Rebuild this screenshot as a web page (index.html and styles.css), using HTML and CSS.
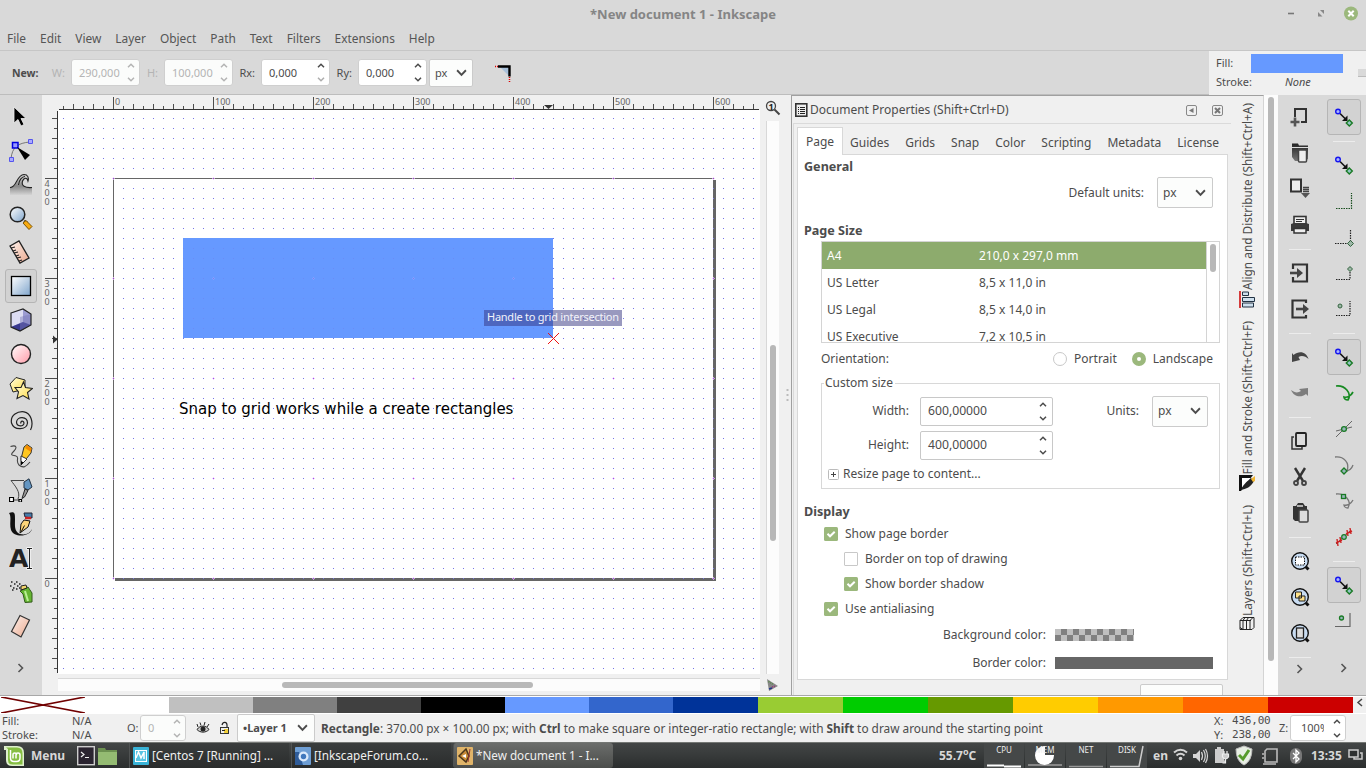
FILE: index.html
```html
<!DOCTYPE html>
<html lang="en">
<head>
<meta charset="utf-8">
<title>*New document 1 - Inkscape</title>
<link rel="stylesheet" href="styles.css">
</head>
<body>
<svg class="defs" width="0" height="0">
  <defs>
    <linearGradient id="gBlue" x1="0" y1="0" x2="1" y2="1"><stop offset="0" stop-color="#fff"/><stop offset="1" stop-color="#7fa5cc"/></linearGradient>
    <linearGradient id="gPink" x1="0" y1="0" x2="1" y2="1"><stop offset="0" stop-color="#fff"/><stop offset="1" stop-color="#ff9ba8"/></linearGradient>
    <linearGradient id="gPeach" x1="0" y1="0" x2="1" y2="1"><stop offset="0" stop-color="#fff3ee"/><stop offset="1" stop-color="#eaa98e"/></linearGradient>
    <linearGradient id="gYellow" x1="0" y1="0" x2="1" y2="1"><stop offset="0" stop-color="#fffde0"/><stop offset="1" stop-color="#ffdc45"/></linearGradient>
    <linearGradient id="gDark" x1="0" y1="0" x2="0" y2="1"><stop offset="0" stop-color="#222"/><stop offset="1" stop-color="#777"/></linearGradient>
    <linearGradient id="gFade" x1="0" y1="0" x2="0" y2="1"><stop offset="0" stop-color="#ddd"/><stop offset=".55" stop-color="#888"/><stop offset="1" stop-color="#d4d4d4"/></linearGradient>
    <symbol id="up" viewBox="0 0 8 5"><path d="M1 4.2L4 1.2L7 4.2" fill="none" stroke="currentColor" stroke-width="1.5"/></symbol>
    <symbol id="down" viewBox="0 0 8 5"><path d="M1 .8L4 3.8L7 .8" fill="none" stroke="currentColor" stroke-width="1.5"/></symbol>
    <symbol id="chev" viewBox="0 0 10 7"><path d="M1 1L5 5.2L9 1" fill="none" stroke="#4c4c4c" stroke-width="1.7"/></symbol>
    <symbol id="more" viewBox="0 0 24 24"><path d="M9.5 8L13.500 12L9.5 16" fill="none" stroke="#555" stroke-width="1.600"/></symbol>
    <symbol id="check" viewBox="0 0 14 14"><rect width="14" height="14" rx="1.5" fill="#9bb87c"/><path d="M3.5 6.8L6 9.3L10.7 4.7" fill="none" stroke="#fff" stroke-width="2"/></symbol>
    <symbol id="snap" viewBox="0 0 24 24"><path d="M8 8.500L14 14.500" fill="none" stroke="#111" stroke-width="1.600"/><path d="M15.500 10.500V16H10z" fill="#111"/><circle cx="6" cy="6.500" r="2.300" fill="#aab4ff" stroke="#1616ee" stroke-width="1.400"/><path d="M17.300 14.900L20.300 17.900L17.300 20.900L14.300 17.900Z" fill="#92c5c5" stroke="#197a24" stroke-width="1.400"/></symbol>
    <symbol id="lens" viewBox="0 0 24 24"><path d="M17 17L20.500 20.500" stroke="#111" stroke-width="3"/><circle cx="12" cy="12" r="8.300" fill="#c8dcf2" stroke="#111" stroke-width="1.400"/></symbol>
    <pattern id="dots" x="63" y="118" width="10" height="10" patternUnits="userSpaceOnUse"><rect width="1" height="1" fill="#7474e8"/></pattern>
    <pattern id="major" x="113" y="178" width="100" height="100" patternUnits="userSpaceOnUse"><rect width="1" height="1" fill="#a63ff0"/><rect x="1" width="1" height="1" fill="#ecc4fa"/><rect x="99" width="1" height="1" fill="#ecc4fa"/><rect y="1" width="1" height="1" fill="#ecc4fa"/><rect y="99" width="1" height="1" fill="#ecc4fa"/></pattern>
    <pattern id="htick" x="113" y="95" width="100" height="15" patternUnits="userSpaceOnUse"><path d="M.5 2V14M20.500 9V14M40.500 9V14M60.500 9V14M80.500 9V14M10.500 11V14M30.500 11V14M50.500 11V14M70.500 11V14M90.500 11V14" stroke="#4c4c4c"/></pattern>
    <pattern id="vtick" x="43" y="178" width="15" height="100" patternUnits="userSpaceOnUse"><path d="M2 .5H14M9 20.500H14M9 40.500H14M9 60.500H14M9 80.500H14M11 10.500H14M11 30.500H14M11 50.500H14M11 70.500H14M11 90.500H14" stroke="#4c4c4c"/></pattern>
    <pattern id="checker" width="12" height="12" patternUnits="userSpaceOnUse"><rect width="12" height="12" fill="#bfbfbf"/><path d="M6 0h6v6H6zM0 6h6v6H0z" fill="#808080"/></pattern>
  </defs>
</svg>

<header class="titlebar">
  <h1>*New document 1 - Inkscape</h1>
  <div class="winbtns">
    <svg width="80" height="20"><path d="M3 9.500h6" stroke="#777" stroke-width="1.600"/><path d="M35 6h4v4zM33 8v4.500h4.500z" fill="#888"/><circle cx="66" cy="9.500" r="7" fill="#9bb87c"/><path d="M63.300 6.800l5.400 5.400M68.700 6.800l-5.400 5.400" stroke="#fff" stroke-width="2"/></svg>
  </div>
</header>

<nav class="menubar"><span>File</span><span>Edit</span><span>View</span><span>Layer</span><span>Object</span><span>Path</span><span>Text</span><span>Filters</span><span>Extensions</span><span>Help</span></nav>

<div class="toolrow">
  <div class="toolctl">
    <b class="t-new">New:</b>
    <label class="dim l-w">W:</label><div class="spin dim"><span>290,000</span><i><svg><use href="#up"/></svg><svg><use href="#down"/></svg></i></div>
    <label class="dim l-h">H:</label><div class="spin dim"><span>100,000</span><i><svg><use href="#up"/></svg><svg><use href="#down"/></svg></i></div>
    <label class="l-rx">Rx:</label><div class="spin"><span>0,000</span><i><svg><use href="#up"/></svg><svg class="faded"><use href="#down"/></svg></i></div>
    <label class="l-ry">Ry:</label><div class="spin"><span>0,000</span><i><svg><use href="#up"/></svg><svg><use href="#down"/></svg></i></div>
    <div class="combo small"><span>px</span><svg><use href="#chev"/></svg></div>
    <svg class="corner" width="20" height="20"><path d="M5 4h9v9z" fill="#a8c0da"/><path d="M3 3.500h11.500v10" fill="none" stroke="#000" stroke-width="2.400"/><path d="M0 3.500h3M14.500 14v5" stroke="#d00" stroke-width="1.500" stroke-dasharray="1 1"/></svg>
  </div>
  <div class="style">
    <div><span>Fill:</span><i class="fillsw"></i></div>
    <div><span>Stroke:</span><em>None</em></div>
    <i class="nub"></i>
  </div>
</div>

<main class="main">
  <aside class="toolbox">
    <svg viewBox="0 0 24 24"><path d="M5 3V19L9 15.500L12 22L15 20.500L12 14.500H17Z" fill="#000" stroke="#eee" stroke-width=".8"/></svg>
    <svg viewBox="0 0 24 24"><path d="M2 21C3 9 9 5 21 4" fill="none" stroke="#777"/><path d="M0.500 19.500h4v4h-4zM19.500 1.500h4v4h-4z" fill="#aaf" stroke="#55e"/><rect x="3.500" y="4.500" width="5.500" height="5.500" fill="#99f" stroke="#00d" stroke-width="1.500"/><path d="M8 9L21 17L16 22Z" fill="#000"/></svg>
    <svg viewBox="0 0 24 24"><path d="M1 23V16C8 16 7 4 15 3C19 2.500 20 6 19 9C18 6 15 6 14 10C13 14 17 17 23 15V23Z" fill="url(#gFade)"/><path d="M1 15.500C8 16 7 3 15 2.500C19 2.500 20 6 19 9C18 5 15 5.500 13.500 9C12 14 16 16 23 15.500M9.500 13C10 8 13 4.500 16 4.500" fill="none" stroke="#222" stroke-width="1.100"/></svg>
    <svg viewBox="0 0 24 24"><path d="M15 15L18 17" stroke="#333" stroke-width="3"/><path d="M14 17L17 14.500L23 20.500L20 23.500Z" fill="#f7aa10" stroke="#7a5200"/><circle cx="8.500" cy="8.500" r="7.300" fill="url(#gBlue)" stroke="#222" stroke-width="1.500"/></svg>
    <svg viewBox="0 0 24 24"><path d="M1 6L10 1L20 18L11 23Z" fill="url(#gPeach)" stroke="#222" stroke-width="1.300"/><path d="M2 8l4-1M4 11l3-1M5 13l4-1M7 16l3-1M8 18l4-1M10 21l3-1" stroke="#222" stroke-width="1.200"/></svg>
    <svg class="sel" viewBox="0 0 30 32"><rect x="5.500" y="6.500" width="19" height="19" fill="url(#gBlue)" stroke="#000" stroke-width="1.300"/></svg>
    <svg viewBox="0 0 24 24"><path d="M2 5L14 1L22 6V17L11 23L2 19Z" fill="#9a9ad2"/><path d="M2 5L14 1V14L2 19Z" fill="#dcdcf2"/><path d="M14 1L22 6V17L14 14Z" fill="#9c9cd2"/><path d="M2 19L14 14L22 17L11 23Z" fill="#38388f"/><path d="M11 9L22 6V17L11 23Z" fill="#7777b8" fill-opacity=".45"/><path d="M2 5L14 1L22 6V17L11 23L2 19Z" fill="none" stroke="#222" stroke-width="1.200"/></svg>
    <svg viewBox="0 0 24 24"><circle cx="12" cy="12" r="9.500" fill="url(#gPink)" stroke="#222" stroke-width="1.400"/></svg>
    <svg viewBox="0 0 24 24"><path d="M1 8L7 1.500L16 4L16 13L4 16Z" fill="url(#gYellow)" stroke="#222"/><path d="M14.500 6L16.500 11.500L23.500 12.500L18.500 16.500L20 23L14 19.500L8 22.500L9.500 16L6 11.500L12 11.500Z" fill="url(#gYellow)" stroke="#222" stroke-width="1.100"/></svg>
    <svg viewBox="0 0 24 24"><path d="M12 13.500C11 11 14.500 10 15 13C15 17 7.500 17 7.500 12C8 6 18.500 6 18.500 13C18 20 5 21 2.500 13C1 5 9 1 15 1.800C22 3 25 13 21.500 20" fill="none" stroke="#222" stroke-width="1.200"/></svg>
    <svg viewBox="0 0 24 24"><path d="M1.500 2.500C8 .5 8 4 5 7C0 12 4 11 7 12C11 13 6 17 10 21C14 24.500 17 23 21 18" fill="none" stroke="#444" stroke-width="1.100"/><path d="M12 15L15 3L18 .5L23 4L22 9L13 20Z" fill="#ffc71f" stroke="#333"/><path d="M18 1L22.500 4.500L22 8L16 4Z" fill="#f58a00"/><path d="M12 12L18 15L12 21Z" fill="#fff" stroke="#333"/><path d="M12 17l2.500 1.500-2.500 2.500z"/></svg>
    <svg viewBox="0 0 24 24"><path d="M2 2.500H15M2 2.500C6 8 12 14 9 21M3 22H11" fill="none" stroke="#444"/><path d="M15 4L20 .8L23 9L19 12L15 10Z" fill="#6496c2" stroke="#234"/><path d="M16 11L19 12.500L15.500 19L13 20.500Z" fill="#999" stroke="#222"/><path d="M.5 19.500h4v4h-4zM10 21.500h2.500v2.500H10z" fill="#fff" stroke="#000" stroke-width="1.200"/></svg>
    <svg viewBox="0 0 24 24"><path d="M0 1C6-1 6 2 6 7C6 14 5 19 11 22C17 23.500 21 21 23 17C21 25 5 26 2 18C0 11 3 5 0 1Z" fill="#111"/><path d="M15 1L23 1V6L16 5Z" fill="#447dab" stroke="#223"/><path d="M16 6h6" stroke="#c22" stroke-width="2.500"/><path d="M15 8L21 9L19 15L11 21L12 12Z" fill="#fbd479" stroke="#111"/><path d="M12 20L15.500 13.500" stroke="#111"/></svg>
    <svg viewBox="0 0 24 24"><text class="aicon" x="0" y="21">A</text><path d="M17.500 2.500h6M20.500 2v20M17.500 22.500h6" fill="none" stroke="#fff" stroke-width="2.600"/><path d="M18 2.500h5M20.500 2v20M18 22.500h5" fill="none" stroke="#222" stroke-width="1.100"/></svg>
    <svg viewBox="0 0 24 24"><path d="M2 2h1.500M5 4h1.500M1 6h1.500M4 8h1.500M7 2h1.500M8 6h1.500M10 4h1.500M3 10h1.500M7 9h1.500M10 8h1.500" stroke="#222" stroke-width="1.500"/><path d="M11 11L19 7L23 13L23 22L16 22.500L14 14Z" fill="#65b532" stroke="#345b1d"/><path d="M12 6L17 5L18 8L12 10Z" fill="#f2d56c" stroke="#222"/><path d="M16 11L19 21" stroke="#baf095" stroke-width="2"/></svg>
    <svg viewBox="0 0 24 24"><path d="M11 1.500L20.500 6L12 23L2.500 17.500Z" fill="url(#gPeach)" stroke="#333" stroke-width="1.200"/></svg>
    <svg class="last" viewBox="0 0 24 24"><use href="#more"/></svg>
  </aside>

  <section class="canvas">
    <svg width="749" height="600" viewBox="42 95 749 600">
      <rect x="42" y="95" width="749" height="600" fill="#f0f0f0"/>
      <rect x="58" y="110" width="702" height="564" fill="#fff"/>
      <rect x="59" y="95" width="700" height="14" fill="url(#htick)"/>
      <rect x="43" y="110" width="15" height="563" fill="url(#vtick)"/>
      <path d="M59 109.500H759M57.500 111V673" stroke="#333"/>
      <path d="M544 105h9l-4.500 4z" fill="#333"/><path d="M53 335.500v8l4.500-4z" fill="#333"/>
      <g class="ruler"><text x="115" y="105">0</text><text x="215" y="105">100</text><text x="315" y="105">200</text><text x="415" y="105">300</text><text x="515" y="105">400</text><text x="615" y="105">500</text><text x="715" y="105">600</text>
      <text x="44.500" y="187">4</text><text x="44.500" y="196">0</text><text x="44.500" y="205">0</text>
      <text x="44.500" y="287">3</text><text x="44.500" y="296">0</text><text x="44.500" y="305">0</text>
      <text x="44.500" y="387">2</text><text x="44.500" y="396">0</text><text x="44.500" y="405">0</text>
      <text x="44.500" y="487">1</text><text x="44.500" y="496">0</text><text x="44.500" y="505">0</text>
      <text x="44.500" y="587">0</text></g>
      <path d="M713 180h3v401H115v-3h598z" fill="#666"/>
      <rect x="59" y="112" width="701" height="561" fill="url(#dots)"/>
      <path d="M113.500 578V178.500H714" fill="none" stroke="#666"/>
      <rect x="59" y="112" width="701" height="561" fill="url(#major)" opacity=".7"/>
      <rect x="183" y="238" width="370" height="100" fill="#69f"/>
      <rect x="183" y="239" width="370" height="99" fill="url(#dots)" opacity=".45"/>
      <rect x="184" y="239" width="368" height="98" fill="url(#major)" opacity=".2"/>
      <text class="drawtext" x="179" y="414">Snap to grid works while a create rectangles</text>
      <rect x="484" y="310" width="138" height="16" fill="#33337f" fill-opacity=".5"/>
      <text class="tip" x="487" y="321" textLength="132">Handle to grid intersection</text>
      <path d="M548 333l11 11M559 333l-11 11" stroke="#e11" stroke-width="1"/>
      <rect x="766" y="121" width="13" height="553" fill="#fcfcfc"/><path d="M766.500 121v553" stroke="#d8d8d8"/>
      <rect x="770" y="345" width="6" height="196" rx="3" fill="#b8b8b8"/>
      <rect x="58" y="678" width="702" height="13" fill="#fcfcfc"/><path d="M58 678.500h702" stroke="#d8d8d8"/>
      <rect x="282" y="682" width="251" height="6" rx="3" fill="#b8b8b8"/>
      <circle cx="771" cy="106" r="4.500" fill="#eee" stroke="#444" stroke-width="1.300"/><path d="M774.500 109.500L779.500 114.500" stroke="#444" stroke-width="2"/><text class="one" x="768.500" y="109.500">1</text>
      <path d="M767 679l11 7-9 5z" fill="#888"/><path d="M768.500 681.500l5 3" stroke="#584" stroke-width="1.500" stroke-dasharray="1 1"/><path d="M772 687l4-1" stroke="#937" stroke-width="1.500" stroke-dasharray="1 1"/><path d="M769 689l3-1" stroke="#238" stroke-width="1.500"/>
      <path d="M787.500 389v2M787.500 394v2M787.500 399v2" stroke="#bbb" stroke-width="2"/>
    </svg>
  </section>

  <section class="dock">
    <div class="dockhead">
      <svg width="13" height="14"><rect x=".8" y=".8" width="11" height="12.400" fill="#eee" stroke="#333" stroke-width="1.600"/><path d="M3 4.500h1M3 6.500h1M3 8.500h1M3 10.500h1M5 4.500h5M5 6.500h5M5 8.500h5M5 10.500h5" stroke="#222"/></svg>
      <span>Document Properties (Shift+Ctrl+D)</span>
      <svg class="hb1" width="11" height="11"><rect x=".5" y=".5" width="10" height="10" rx="1.500" fill="none" stroke="#888"/><path d="M7.500 3v5L3 5.500z" fill="#777"/></svg>
      <svg width="11" height="11"><rect x=".5" y=".5" width="10" height="10" rx="1.500" fill="none" stroke="#888"/><path d="M3 3l5 5M8 3L3 8" stroke="#777" stroke-width="2"/></svg>
    </div>
    <div class="notebook">
      <div class="tabs"><span class="on">Page</span><span>Guides</span><span>Grids</span><span>Snap</span><span>Color</span><span>Scripting</span><span>Metadata</span><span>License</span></div>
      <div class="page">
        <h2 class="h-general">General</h2>
        <div class="units"><span>Default units:</span><div class="combo"><span>px</span><svg><use href="#chev"/></svg></div></div>
        <h2 class="h-size">Page Size</h2>
        <div class="list">
          <div class="rows">
            <div class="row on"><span>A4</span><span>210,0 x 297,0 mm</span></div>
            <div class="row"><span>US Letter</span><span>8,5 x 11,0 in</span></div>
            <div class="row"><span>US Legal</span><span>8,5 x 14,0 in</span></div>
            <div class="row"><span>US Executive</span><span>7,2 x 10,5 in</span></div>
          </div>
          <div class="lscroll"><i></i></div>
        </div>
        <div class="orient"><span class="grow">Orientation:</span><i class="radio"></i><span class="por">Portrait</span><i class="radio on"></i><span>Landscape</span></div>
        <div class="frame">
          <span class="legend">Custom size</span>
          <div class="frow"><label>Width:</label><div class="num"><span>600,00000</span><i><svg><use href="#up"/></svg><svg><use href="#down"/></svg></i></div><span class="ul">Units:</span><div class="combo"><span>px</span><svg><use href="#chev"/></svg></div></div>
          <div class="frow"><label>Height:</label><div class="num"><span>400,00000</span><i><svg><use href="#up"/></svg><svg><use href="#down"/></svg></i></div></div>
          <div class="resize"><svg width="11" height="11"><rect x=".5" y=".5" width="10" height="10" rx="1" fill="#fff" stroke="#bbb"/><path d="M3 5.500h5M5.500 3v5" stroke="#444"/></svg><span>Resize page to content...</span></div>
        </div>
        <h2 class="h-display">Display</h2>
        <div class="chk"><svg><use href="#check"/></svg>Show page border</div>
        <div class="chk sub"><i class="box"></i>Border on top of drawing</div>
        <div class="chk sub"><svg><use href="#check"/></svg>Show border shadow</div>
        <div class="chk"><svg><use href="#check"/></svg>Use antialiasing</div>
        <div class="color"><span>Background color:</span><svg width="79" height="12"><rect width="79" height="12" fill="url(#checker)"/></svg></div>
        <div class="color"><span>Border color:</span><i class="bordersw"></i></div>
      </div>
      <div class="close"><i></i></div>
    </div>
  </section>

  <aside class="vtabs">
    <div class="vt v1"><span>Align and Distribute (Shift+Ctrl+A)</span><svg width="16" height="17"><path d="M1 0v17" stroke="#c00" stroke-width="1.500"/><path d="M3.500 12h11v4h-11zM3.500 6.500h12v4h-12zM3.500 1h6v3.500h-6z" fill="#cfe0ee" stroke="#234"/></svg></div>
    <div class="vt v2"><span>Fill and Stroke (Shift+Ctrl+F)</span><svg width="16" height="16"><path d="M0 0h14L2 16H0z" fill="#111"/><path d="M3 3h9L3 13z" fill="#fff"/><path d="M2 15C5 8 9 6 12 3L15 6C12 12 7 14 2 15z" fill="#222"/><path d="M12 4L16 1V6l-2 1z" fill="#f2b632"/></svg></div>
    <div class="vt v3"><span>Layers (Shift+Ctrl+L)</span><svg width="16" height="13"><path d="M1 12.500V3.500l3-3h11M4 12.500V3.500l2-3M7.500 12.500V3.500l2-3M11 12.500V3.500l3-3M1 3.500h11M1 12.500h12l2-2M4 12.500l-3-2M15 .5v10" fill="none" stroke="#222"/></svg></div>
  </aside>
  <div class="dscroll"><i></i></div>

  <aside class="cmds">
    <svg viewBox="0 0 24 24"><path d="M7 12V4h11v13h-5" fill="none" stroke="#333" stroke-width="2"/><path d="M2.500 17h9M7 12.500v9" stroke="#555" stroke-width="2.600"/></svg>
    <svg viewBox="0 0 24 24"><path d="M4 2.500h6l1 2h9V18l-3 2H7l-3-4z" fill="url(#gDark)"/><path d="M3 6.500h18" stroke="#ddd"/><rect x="10.500" y="9" width="8" height="12" rx="1" fill="#eee" stroke="#444" stroke-width="1.500"/></svg>
    <svg viewBox="0 0 24 24"><rect x="3" y="2.500" width="10" height="12" fill="#eee" stroke="#333" stroke-width="2"/><path d="M15 10.500h6M15 12.500h6M15 14.500h6" stroke="#444" stroke-width="1.300"/><path d="M13 16h9l-4.500 5z" fill="#555"/></svg>
    <svg viewBox="0 0 24 24"><rect x="6" y="3.500" width="12" height="8" fill="#eee" stroke="#333" stroke-width="1.600"/><path d="M8 6.500h8M8 8.500h6" stroke="#333"/><path d="M3 11l3-1h12l3 1v7H3z" fill="#3a3a3a"/><rect x="6" y="15.500" width="12" height="4.500" fill="#eee" stroke="#333" stroke-width="1.500"/></svg>
    <hr>
    <svg viewBox="0 0 24 24"><path d="M5 8V3.500h14v17H5V16" fill="none" stroke="#333" stroke-width="2.200"/><path d="M2 12h8" stroke="#444" stroke-width="2.600"/><path d="M9 7l6 5-6 5z" fill="#444"/></svg>
    <svg viewBox="0 0 24 24"><path d="M18 6V3.500H4.500v17H18V18" fill="none" stroke="#333" stroke-width="2.200"/><path d="M8 12h9" stroke="#444" stroke-width="2.600"/><path d="M15 7l6 5-6 5z" fill="#444"/></svg>
    <hr>
    <svg viewBox="0 0 24 24"><path d="M4 8l1.500 2c6-5 13-3 15 4-3-3-7-4-10-2l1.500 3-8 2z" fill="#444"/></svg>
    <svg viewBox="0 0 24 24" class="half"><path d="M20 7v8l-2-2c-5 4-12 3-15-4 4 3 7 3 10 1l-2-2z" fill="#333"/></svg>
    <hr>
    <svg viewBox="0 0 24 24"><path d="M6 8H4v12h10v-2" fill="none" stroke="#333" stroke-width="1.500"/><rect x="8" y="4" width="10" height="13" rx="1" fill="#ddd" stroke="#222" stroke-width="1.800"/></svg>
    <svg viewBox="0 0 24 24"><path d="M7 3l8 13M17 3L9 16" stroke="#333" stroke-width="2.400"/><circle cx="8" cy="18" r="2" fill="none" stroke="#444" stroke-width="1.800"/><circle cx="16" cy="18" r="2" fill="none" stroke="#444" stroke-width="1.800"/></svg>
    <svg viewBox="0 0 24 24"><path d="M5 5h3l2-3h5l2 3h2v15H7l-2-2z" fill="#333"/><path d="M9 5h6" stroke="#ddd" stroke-width="1.500"/><rect x="11" y="9" width="9" height="12" rx="1" fill="#ddd" stroke="#444" stroke-width="1.500"/></svg>
    <hr>
    <svg viewBox="0 0 24 24"><use href="#lens"/><rect x="7.500" y="8" width="9" height="8" fill="#fff" stroke="#111" stroke-dasharray="1.500 1"/></svg>
    <svg viewBox="0 0 24 24"><use href="#lens"/><path d="M7.500 7h6v6h-6zM11 11h6v5h-6z" fill="#ffe28a" stroke="#222"/></svg>
    <svg viewBox="0 0 24 24"><use href="#lens"/><rect x="8.500" y="7" width="7" height="10" fill="#ddd" stroke="#222" stroke-width="1.300"/></svg>
    <hr>
    <svg class="last" viewBox="0 0 24 24"><use href="#more"/></svg>
  </aside>
  <aside class="cmds snaps">
    <div class="press"><svg viewBox="0 0 24 24"><use href="#snap"/></svg></div>
    <hr>
    <svg viewBox="0 0 24 24"><use href="#snap"/></svg>
    <svg viewBox="0 0 24 24"><path d="M4 19.500h15.500V4" fill="none" stroke="#174d1d" stroke-width="1.200" stroke-dasharray="1.500 1"/></svg>
    <svg viewBox="0 0 24 24"><path d="M3 18.500h15.500V4" fill="none" stroke="#222" stroke-width="1.200" stroke-dasharray="1.500 1"/><path d="M18.500 15.500l3 3-3 3-3-3z" fill="#9cb7a7" stroke="#356540"/></svg>
    <svg viewBox="0 0 24 24"><path d="M4 18.500h14V6" fill="none" stroke="#222" stroke-width="1.200" stroke-dasharray="1.500 1"/><path d="M18 5.500l2.500 2.500-2.500 2.500L15.500 8z" fill="#9cb7a7" stroke="#356540"/></svg>
    <svg viewBox="0 0 24 24"><path d="M4 18.500h14V4" fill="none" stroke="#222" stroke-width="1.200" stroke-dasharray="1.500 1"/><circle cx="8" cy="9" r="2" fill="#9cb7a7" stroke="#356540"/></svg>
    <hr>
    <div class="press"><svg viewBox="0 0 24 24"><use href="#snap"/></svg></div>
    <svg viewBox="0 0 24 24"><path d="M4 5c9-1 16 7 12 14-3 0-4-2-4-3 3 1 7-1 9-5" fill="none" stroke="#178a22" stroke-width="1.700"/></svg>
    <svg viewBox="0 0 24 24"><path d="M4 20L20 4M4 14l16-4" stroke="#666"/><circle cx="12" cy="12" r="2.400" fill="#96b6ba" stroke="#197a24" stroke-width="1.300"/></svg>
    <svg viewBox="0 0 24 24"><path d="M3 4c9-1 15 6 12 13.500M13 18c4 0 7-3 8-6" fill="none" stroke="#777" stroke-width="1.300"/><path d="M12 15l3 3-3 3-3-3z" fill="#96b6ba" stroke="#197a24" stroke-width="1.300"/></svg>
    <svg viewBox="0 0 24 24"><path d="M4 5c9-1 16 7 12 14-3 0-4-2-4-3 3 1 7-1 9-5" fill="none" stroke="#777" stroke-width="1.300"/><rect x="9.500" y="5.500" width="4" height="4" fill="#96b6ba" stroke="#197a24" stroke-width="1.300"/></svg>
    <svg viewBox="0 0 24 24"><path d="M4 19L19 5" stroke="#555"/><path d="M5 14l1 7M8 12l1 6M4 18l6-3M15 5l1 6M18 3l1 6M14 9l6-3" stroke="#c22" stroke-width="1.400"/><circle cx="12" cy="12" r="2.300" fill="#96b6ba" stroke="#197a24" stroke-width="1.200"/></svg>
    <hr>
    <div class="press"><svg viewBox="0 0 24 24"><use href="#snap"/></svg></div>
    <svg viewBox="0 0 24 24"><path d="M3 17.500h15V4" fill="none" stroke="#666" stroke-width="1.200"/><circle cx="9.500" cy="9" r="2" fill="#96b6ba" stroke="#197a24" stroke-width="1.300"/></svg>
    <svg class="last slast" viewBox="0 0 24 24"><use href="#more"/></svg>
  </aside>
</main>

<div class="palette">
  <i class="none"><svg viewBox="0 0 84 16" width="84" height="16"><path d="M0 0L84 16M84 0L0 16" stroke="#700000" stroke-width="1.700"/></svg></i><i class="c1"></i><i class="c2"></i><i class="c3"></i><i class="c4"></i><i class="c5"></i><i class="c6"></i><i class="c7"></i><i class="c8 w"></i><i class="c9 w"></i><i class="c10 w"></i><i class="c11 w"></i><i class="c12 w"></i><i class="c13 w"></i><i class="c14 w"></i><i class="c15 w"></i>
  <svg class="pmore" width="12" height="16"><path d="M9 2L5 5.500L9 9" fill="none" stroke="#444" stroke-width="1.500"/></svg>
</div>

<footer class="status">
  <div class="fs"><div><span>Fill:</span><span>N/A</span></div><div><span>Stroke:</span><span>N/A</span></div></div>
  <span class="o">O:</span>
  <div class="spin dim op"><span>0</span><i><svg><use href="#up"/></svg><svg><use href="#down"/></svg></i></div>
  <svg class="eye" width="14" height="14"><path d="M1 8.500C4 4 10 4 13 8.500C10 12 4 12 1 8.500z" fill="#ccc" stroke="#222"/><circle cx="7" cy="8" r="2.500" fill="#222"/><path d="M2 6L1 3M5 4.500L4 1.500M8 4.500L9 1M11 6L13 3" stroke="#222"/></svg>
  <svg class="lock" width="12" height="14"><path d="M3 4c1-4 5-3 5 0v3" fill="none" stroke="#222" stroke-width="1.200"/><rect x="1.500" y="6.500" width="8" height="6" fill="#eee" stroke="#333"/><rect x="5" y="8" width="4" height="4" fill="#f0cf3a"/><path d="M3 9.500h3" stroke="#222"/></svg>
  <div class="combo layer"><span>•Layer 1</span><svg><use href="#chev"/></svg></div>
  <p class="msg"><b>Rectangle</b>: 370.00 px × 100.00 px; with <b>Ctrl</b> to make square or integer-ratio rectangle; with <b>Shift</b> to draw around the starting point</p>
  <div class="xy"><div><span>X:</span><code>436,00</code></div><div><span>Y:</span><code>238,00</code></div></div>
  <span class="z">Z:</span>
  <div class="spin zoom"><span>100%</span><i><svg><use href="#up"/></svg><svg><use href="#down"/></svg></i></div>
</footer>

<div class="taskbar">
  <svg class="mint" width="20" height="20"><path d="M0 0h13q7 0 7 7v13H8Q2 20 2 14V4H0z" fill="#dff0cd"/><path d="M2 1.500h11q5.500 0 5.500 6v11H8.500Q4 18.500 4 14V3z" fill="#86be43"/><path d="M6.500 4v8q0 3.500 3.500 3.500h2.500q3.500 0 3.500-3.500V9q0-2-2-2t-2 2v3.500M12.500 9q0-2-1.800-2T9 9v3.500" fill="none" stroke="#fff" stroke-width="1.500"/></svg>
  <b class="mlabel">Menu</b>
  <svg class="term" width="18" height="20"><rect x=".7" y=".7" width="16.600" height="18" fill="#2a2430" stroke="#ccc" stroke-width="1.400"/><path d="M4 6l3 2.500L4 11M8 11.500h4" fill="none" stroke="#eee" stroke-width="1.200"/></svg>
  <svg class="folder" width="19" height="18"><path d="M0 1h7l1 2h11v15H0z" fill="#6c9150"/><path d="M0 5h19v13H0z" fill="#94bb72"/></svg>
  <div class="task"><svg width="16" height="18"><rect width="16" height="18" rx="1" fill="#39b3d7"/><rect x="2.500" y="3.500" width="11" height="11" fill="#58c4e2" stroke="#fff"/><path d="M3 11l2.500-6 2.500 6 3-6v7" fill="none" stroke="#fff" stroke-width="1.500"/></svg><span>[Centos 7 [Running] ...</span></div>
  <div class="task"><svg width="16" height="18"><rect width="16" height="18" rx="1" fill="#6e9ed4"/><path d="M0 5h4l4 13H0z" fill="#2f5c99"/><circle cx="8.500" cy="9.500" r="5" fill="#dceafb"/><circle cx="8.500" cy="9.500" r="2.700" fill="#4178bd"/></svg><span>[InkscapeForum.co...</span></div>
  <div class="task on"><svg width="16" height="18"><rect width="16" height="18" rx="1" fill="#e0b469"/><path d="M2 9L9 2l3 7-3 6z" fill="#c98b38" stroke="#49351c" stroke-width="1.500"/><path d="M13 2l-2 13" stroke="#933"/><path d="M5 9l4-2v4z" fill="#fff"/></svg><span>*New document 1 - I...</span></div>
  <span class="spacer"></span>
  <b class="temp">55.7<sup>o</sup>C</b>
  <div class="mon"><span>CPU</span><svg width="40" height="25"><path d="M3 22.500h17M20 23.500h17" fill="none" stroke="#fff" stroke-width="2"/></svg></div>
  <div class="mon"><svg width="40" height="25"><path d="M3 22h34" stroke="#888" stroke-width="2"/><path d="M20 13V4A9.500 9.500 0 1 0 29 13z" fill="#fff" transform="translate(0 -1)"/></svg><span>MEM</span></div>
  <div class="mon"><span>NET</span><svg width="40" height="25"><path d="M3 23.500h34" stroke="#999" stroke-width="1.500"/></svg></div>
  <div class="mon"><span>DISK</span><svg width="40" height="25"><path d="M3 23.500h29L36 3" fill="none" stroke="#ccc" stroke-width="1.500"/></svg></div>
  <b class="lang">en</b>
  <svg class="tray" width="136" height="24">
    <path d="M1 8.500q6.500-5.500 13 0M3.500 11.500q4-3.500 8 0" fill="none" stroke="#d5d5d5" stroke-width="2"/><circle cx="7.500" cy="14.500" r="1.800" fill="#d5d5d5"/>
    <path d="M20 10h3l4-4v12l-4-4h-3z" fill="#d5d5d5"/><path d="M28.500 8q2 4 0 8M30.500 6q3.500 6 0 12M32.500 5q4 7 0 14" fill="none" stroke="#d5d5d5" stroke-width="1.200"/>
    <path d="M42 5h2V3h4v2h3v14h-9z" fill="#ccc"/><path d="M49.500 10h6v3q-3 4-6 0zM51 10V7M54 10V7M52.500 15v4h-3" fill="#ccc" stroke="#eee" stroke-width="1.200"/>
    <path d="M63 5l8-3 8 3q0 12-8 16-8-4-8-16z" fill="#e8efe4" stroke="#bbb"/><path d="M66 11l4 4 6-9" fill="none" stroke="#579b2c" stroke-width="3"/>
    <path d="M94 5h10v13H92V7zM89 10h2M89 14h2M90 20h13" fill="none" stroke="#bbb" stroke-width="1.600"/>
    <rect x="117" y="4" width="12" height="16" rx="6" fill="#777"/><path d="M120 9l6 6-3 3V6l3 3-6 6" fill="none" stroke="#fff" stroke-width="1.300"/>
  </svg>
  <b class="clock">13:35</b>
  <svg class="wins" width="15" height="14"><path d="M12 4h2v6H6V8" fill="none" stroke="#ccc" stroke-width="1.500"/><rect x="1" y="1" width="9" height="7" fill="#2e3131" stroke="#ccc" stroke-width="1.500"/></svg>
</div>
</body>
</html>
```

FILE: styles.css
```css
* { box-sizing: border-box; }
body { margin: 0; width: 1366px; height: 768px; overflow: hidden; display: flex; flex-direction: column; background: #d9d9d9; color: #4c4c4c; font: 12px/16px "Noto Sans", sans-serif; }
.defs { position: absolute; }
svg { display: block; flex: none; }
i { font-style: normal; }
h1, h2, p { margin: 0; }

.titlebar { height: 28px; display: flex; align-items: center; justify-content: center; position: relative; }
.titlebar h1 { font-size: 13px; color: #858585; padding-bottom: 1px; }
.winbtns { position: absolute; right: 0; top: 4px; width: 81px; }

.menubar { height: 23px; display: flex; gap: 14px; padding: 3px 0 0 7px; border-bottom: 1px solid #c6c6c6; color: #555; line-height: 15px; font-size: 11.900px; }

.toolrow { height: 44px; display: flex; }
.toolctl { flex: 1; display: flex; align-items: center; font-size: 11px; border-bottom: 1px solid #bdbdbd; }
.t-new { width: 42px; padding-left: 12px; font-size: 10.500px; }
.toolctl label { text-align: right; padding-right: 6px; }
.l-w { width: 29px; }
.l-h { width: 24px; }
.l-rx { width: 28px; }
.l-ry { width: 28px; }
.dim { color: #b4b4b4; }
.spin { height: 27px; width: 69px; background: #fff; border: 1px solid #cfcfcf; border-radius: 3px; display: flex; align-items: center; padding: 0 4px 0 7px; justify-content: space-between; }
.spin.dim { background: #fbfcfb; }
.spin i, .num i { display: flex; flex-direction: column; gap: 9px; }
.spin i svg, .num i svg { width: 8px; height: 5px; }
.faded { opacity: .45; }
.combo { width: 56px; height: 31px; background: #fcfdfc; border: 1px solid #cbcbcb; border-radius: 2px; display: flex; align-items: center; justify-content: space-between; padding: 0 6px 0 5px; }
.combo svg { width: 11px; height: 8px; }
.combo.small { width: 44px; height: 28px; margin-left: 2px; padding-right: 5px; }
.corner { margin-left: 22px; }
.style { width: 157px; background: #f0f0f0; font-size: 11px; padding: 3px 0 0 7px; position: relative; }
.style > div { display: flex; height: 19px; align-items: center; }
.style span, .style em { padding-bottom: 2px; }
.style span { width: 35px; }
.fillsw { width: 92px; height: 19px; background: #69f; }
.style em { margin-left: 34px; }
.nub { position: absolute; right: 0; top: 18px; width: 8px; height: 8px; background: #d9d9d9; border-bottom: 1px solid #bbb; }

.main { height: 601px; display: flex; border-bottom: 1px solid #a8a8a8; }
.toolbox { width: 42px; padding: 4px 0 0 0; display: flex; flex-direction: column; align-items: center; }
.toolbox svg { width: 24px; height: 24px; margin: 5px 0; }
.toolbox svg.sel { width: 32px; height: 34px; margin: 0; border: 1px solid #b5b5b5; border-radius: 3px; background: #d2d2d2; }
.toolbox svg.last { margin-top: 13px; }
.aicon { font: bold 25px "DejaVu Sans", sans-serif; fill: #222; }
.canvas { width: 749px; }
.ruler text { font-size: 9px; fill: #666; }
.drawtext { font: 15px "DejaVu Sans", sans-serif; fill: #000; }
.tip { font-size: 11px; fill: #f2f2fa; }
.one { font: bold 9px "Noto Sans", sans-serif; fill: #222; }

.dock { width: 440px; background: #f0f0f0; border-left: 1px solid #a0a0a0; border-top: 1px solid #a0a0a0; overflow: hidden; white-space: nowrap; }
.dockhead { height: 27px; display: flex; align-items: center; padding: 1px 8px 0 3px; }
.dockhead span { margin-left: 2px; }
.dockhead .hb1 { margin-left: auto; margin-right: 15px; }
.notebook { height: 573px; border-top: 1px solid #dadada; border-left: 1px solid #dadada; margin-left: 1px; padding: 3px 3px 0 3px; }
.tabs { height: 28px; display: flex; border-bottom: 1px solid #d8d8d8; }
.tabs span { padding: 8px 0 0 0; text-align: center; margin-right: 16px; flex: none; }
.tabs .on { width: 46px; height: 28px; background: #fff; border: 1px solid #d8d8d8; border-bottom: 0; padding: 6px 0 0; margin-right: 7px; }
.page { height: 525px; background: #fff; border: 1px solid #d8d8d8; border-top: 0; padding: 0 7px 0 6px; }
.page h2 { font-size: 12.600px; line-height: 22px; }
.page h2.h-general { height: 22px; padding-top: 1px; }
.page h2.h-size { height: 22px; margin-top: 11px; padding-top: 1px; }
.page h2.h-display { margin-top: 12px; height: 20px; }
.units { height: 31px; display: flex; justify-content: flex-end; align-items: center; gap: 13px; padding-right: 7px; }
.list { height: 102px; margin-left: 17px; border: 1px solid #d4d4d4; display: flex; overflow: hidden; }
.rows { flex: 1; }
.row { height: 27px; display: flex; align-items: center; padding: 1px 0 0 5px; }
.row span:first-child { width: 152px; }
.row.on { background: #8dab6d; color: #fff; }
.lscroll { width: 13px; border-left: 1px solid #d4d4d4; padding: 2px 0 0 3px; }
.lscroll i { display: block; width: 6px; height: 28px; border-radius: 3px; background: #b8b8b8; }
.orient { height: 31px; display: flex; align-items: center; padding: 1px 7px 0 17px; }
.grow { flex: 1; }
.radio { width: 14px; height: 14px; border-radius: 7px; border: 1px solid #c8c8c8; margin-right: 7px; }
.radio.on { border: 5px solid #9bb87c; }
.por { margin-right: 15px; }
.frame { position: relative; height: 106px; margin: 9px 0 0 17px; border: 1px solid #d8d8d8; padding-top: 11px; }
.legend { position: absolute; left: 2px; top: -9px; background: #fff; padding: 0 2px 0 1px; }
.frow { display: flex; align-items: center; height: 34px; margin-top: -1px; }
.frow + .frow { margin-top: 0; }
.frow label { width: 98px; padding-right: 11px; text-align: right; }
.num { width: 133px; height: 29px; border: 1px solid #c8c8c8; border-radius: 2px; display: flex; align-items: center; justify-content: space-between; padding: 0 5px 0 7px; }
.num > span { font-size: 12.2px; }
.frow .ul { width: 99px; text-align: right; padding-right: 13px; }
.resize { display: flex; align-items: center; height: 25px; padding: 0 0 1px 6px; gap: 4px; }
.chk { display: flex; align-items: center; height: 25px; padding: 1px 0 0 20px; gap: 7px; }
.chk.sub { padding-left: 40px; }
.chk svg, .box { width: 14px; height: 14px; }
.box { border: 1px solid #c8c8c8; border-radius: 1px; }
.color { display: flex; height: 28px; align-items: center; gap: 9px; }
.color span { width: 242px; text-align: right; }
.bordersw { width: 158px; height: 12px; background: #666; }
.close { display: flex; justify-content: flex-end; padding: 4px 5px 0; }
.close i { width: 83px; height: 20px; border: 1px solid #cbcbcb; border-radius: 2px; background: #fcfdfc; }

.vtabs { width: 33px; background: #f0f0f0; border-top: 1px solid #a0a0a0; border-right: 1px solid #d4d4d4; display: flex; flex-direction: column; white-space: nowrap; }
.vt { display: flex; flex-direction: column; align-items: center; padding-top: 7px; }
.vt span { writing-mode: vertical-rl; transform: rotate(180deg); flex: none; font-size: 11.850px; }
.vt svg { margin-top: 1px; }
.v1 { height: 218px; }
.v2 { height: 184px; }
.v3 { height: 140px; }
.dscroll { width: 14px; background: #fcfcfc; padding: 2px 0 0 4px; }
.dscroll i { display: block; width: 6px; height: 564px; border-radius: 3px; background: #b8b8b8; }

.cmds { width: 44px; display: flex; flex-direction: column; align-items: center; padding-top: 4px; }
.cmds > svg { width: 24px; height: 24px; margin: 6px 0; }
.cmds hr { width: 22px; height: 1px; border: 0; background: #ececec; margin: 6px 0 5px; }
.press { width: 34px; height: 36px; border: 1px solid #b5b5b5; border-radius: 3px; background: #d2d2d2; padding: 5px 4px; }
.press svg { width: 24px; height: 24px; }
.half { opacity: .55; }
.cmds > svg.last { margin: -6px 0 0; }
.cmds > svg.slast { margin-top: 17px; }

.palette { height: 18px; background: #fff; padding: 1px 0 1px 1px; display: flex; }
.palette i { width: 84px; height: 16px; flex: none; }
.palette i.w { width: 85px; }
.none { background: #fff; }
.c1 { background: #fff; }
.c2 { background: #c0c0c0; }
.c3 { background: #808080; }
.c4 { background: #404040; }
.c5 { background: #000; }
.c6 { background: #69f; }
.c7 { background: #36c; }
.c8 { background: #039; }
.c9 { background: #9c3; }
.c10 { background: #0c0; }
.c11 { background: #690; }
.c12 { background: #fc0; }
.c13 { background: #f90; }
.c14 { background: #f60; }
.c15 { background: #c00; }
.pmore { background: #f0f0f0; width: 14px; }

.status { height: 28px; background: #f0f0f0; display: flex; align-items: center; }
.fs { width: 127px; padding-left: 2px; font-size: 11px; line-height: 14px; }
.fs div { display: flex; }
.fs span:first-child { width: 70px; }
.o { font-size: 11px; width: 13px; }
.spin.op { width: 46px; height: 26px; font-size: 11px; }
.eye { margin-left: 10px; }
.lock { margin-left: 9px; }
.layer { width: 78px; height: 28px; margin-left: 6px; font-size: 11px; font-weight: bold; }
.msg { margin-left: 6px; white-space: nowrap; flex: 1; font-size: 11.840px; padding-bottom: 1px; }
.xy { width: 65px; font-size: 11px; line-height: 14px; }
.xy div { display: flex; }
.xy span { width: 18px; }
.xy code { font: 11px/14px "DejaVu Sans Mono", monospace; letter-spacing: -.2px; }
.z { width: 11px; font-size: 11px; }
.spin.zoom { width: 56px; height: 26px; margin-right: 20px; font-size: 11px; padding-left: 10px; }
.zoom span { width: 23px; overflow: hidden; }

.taskbar { height: 26px; border-top: 1px solid #747774; background: linear-gradient(#434646, #2b2e2e); display: flex; align-items: center; color: #d8d8d8; }
.mint { margin-left: 4px; }
.mlabel { width: 46px; padding-left: 7px; font-size: 12px; }
.term { margin-left: 7px; }
.folder { margin: 0 12px 0 3px; }
.task { width: 160px; height: 25px; margin-right: 2px; display: flex; align-items: center; gap: 3px; padding-left: 3px; background: linear-gradient(#3a3d3d, #2a2c2c); border-left: 1px solid #505353; font-size: 11.700px; color: #f0f0f0; white-space: nowrap; }
.task span { padding-bottom: 1px; }
.task.on { background: linear-gradient(#6b6d6b, #4b4d4b); border-radius: 3px; }
.spacer { flex: 1; }
.temp { width: 45px; white-space: nowrap; font-size: 12px; }
.temp sup { font-size: 9px; line-height: 0; }
.mon { width: 40px; height: 25px; margin-right: 1px; background: #454848; position: relative; text-align: center; font-size: 8px; line-height: 14px; color: #eee; }
.mon svg { position: absolute; left: 0; top: 0; }
.mon span { position: relative; }
.lang { margin-left: 5px; width: 20px; font-size: 12px; }
.clock { font-size: 12px; width: 37px; }
.tray { margin-right: 2px; }
.wins { margin-right: 3px; }
```
